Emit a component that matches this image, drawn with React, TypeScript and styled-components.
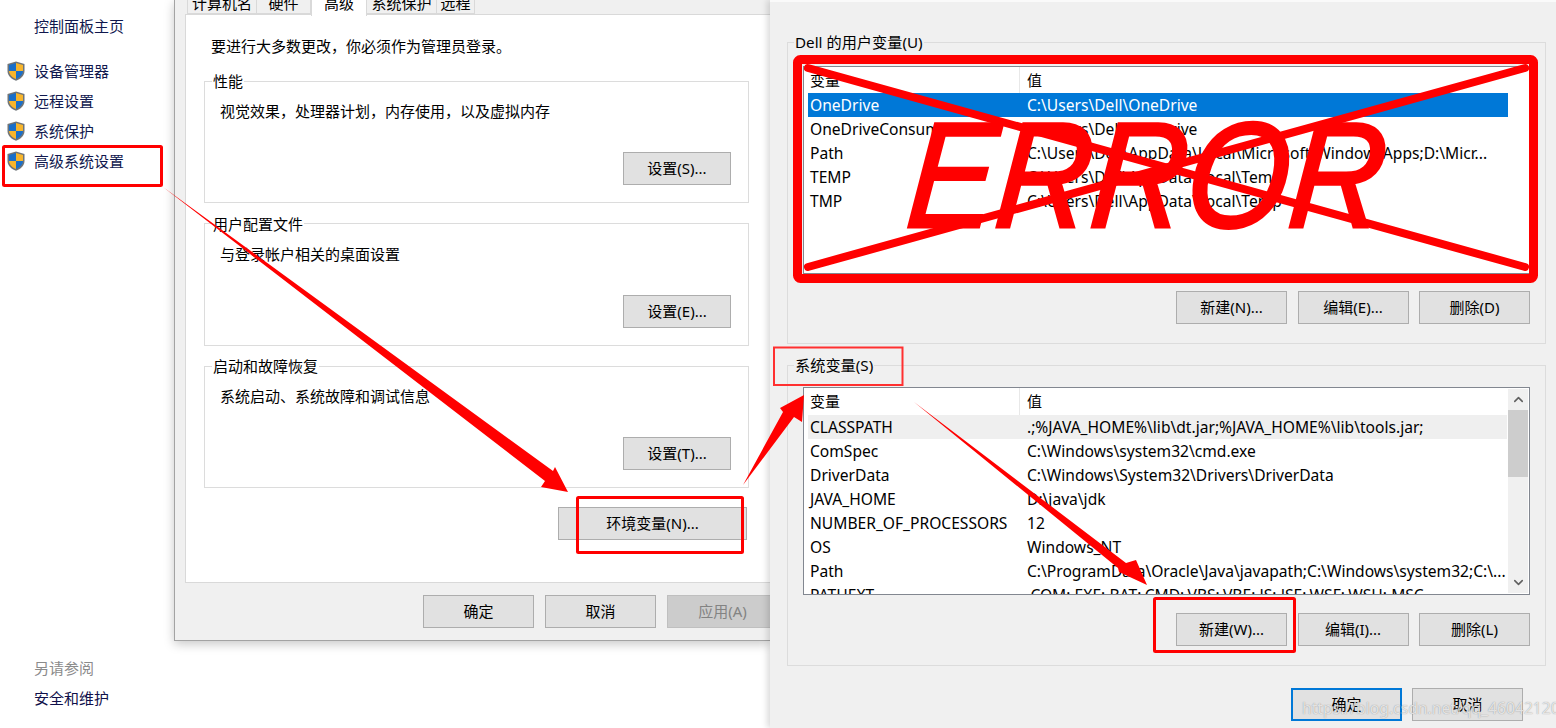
import React from "react";
import styled, { createGlobalStyle } from "styled-components";
import { ChevronUp, ChevronDown } from "lucide-react";

const Global = createGlobalStyle`
  html, body { margin: 0; padding: 0; background: #fff; }
  * { box-sizing: border-box; }
  body { font-family: "Noto Sans", "Noto Sans CJK SC", sans-serif; font-size: 15px; color: #000; }
`;

const Page = styled.div`
  position: relative;
  display: flex;
  width: 1556px;
  height: 728px;
  overflow: hidden;
  background: #fff;
`;

/* Sidebar */
const Sidebar = styled.aside`
  width: 174px;
  flex: none;
  display: flex;
  flex-direction: column;
  padding: 11px 0 15px;
  font-size: 15px;
  line-height: 30px;
  color: #10184e;
`;
const HomeLink = styled.div`
  padding-left: 34px;
  margin-bottom: 15px;
`;
const NavItem = styled.div`
  display: flex;
  align-items: center;
  gap: 9px;
  padding-left: 7px;
  height: 30px;
`;
const SeeAlso = styled.div`
  margin-top: auto;
  padding-left: 34px;
  color: #8b8b8b;
`;
const SeeLink = styled.div`
  padding-left: 34px;
  color: #10104a;
`;

/* System properties dialog */
const Dialog = styled.section`
  width: 596px;
  height: 641px;
  flex: none;
  background: #f0f0f0;
  border-left: 1px solid #a3a3a3;
  border-bottom: 1px solid #a3a3a3;
  box-shadow: 0 3px 10px rgba(0, 0, 0, 0.22);
  padding-left: 10px;
  overflow: hidden;
`;
const TabStrip = styled.div`
  display: flex;
  height: 14px;
  padding-left: 2px;
  width: 620px;
  position: relative;
  z-index: 1;
`;
const Tab = styled.div<{ $w: number; $active?: boolean }>`
  width: ${(p) => p.$w}px;
  height: ${(p) => (p.$active ? 26 : 24)}px;
  margin-top: -10px;
  flex: none;
  text-align: center;
  line-height: 24px;
  font-size: 15px;
  background: ${(p) => (p.$active ? "#fff" : "#f0f0f0")};
  border: 1px solid #d9d9d9;
  border-bottom: ${(p) => (p.$active ? "0" : "1px solid #d9d9d9")};
  border-left-width: ${(p) => (p.$active ? "1px" : "0")};
  &:first-child { border-left-width: 1px; }
`;
const TabPanel = styled.div`
  width: 620px;
  height: 569px;
  background: #fff;
  border: 1px solid #d9d9d9;
  padding: 18px 0 0 18px;
`;
const Intro = styled.div`
  padding-left: 7px;
  line-height: 26px;
  height: 38px;
`;
const Groups = styled.div`
  width: 545px;
  display: flex;
  flex-direction: column;
  gap: 10.5px;
`;
const PropGroup = styled.fieldset`
  margin: 0;
  height: 132px;
  padding: 10px 17px 0 15px;
  border: 1px solid #dcdcdc;
  min-width: 0;
`;
const PropLegend = styled.legend`
  margin-left: -8px;
  padding: 0 1px;
  line-height: 20px;
`;
const PropText = styled.div`
  line-height: 20px;
`;
const GroupFoot = styled.div`
  margin-top: 31px;
  display: flex;
  justify-content: flex-end;
`;
const Btn = styled.div<{ $w?: number; $disabled?: boolean; $primary?: boolean }>`
  width: ${(p) => p.$w ?? 111}px;
  height: 33px;
  flex: none;
  display: flex;
  align-items: center;
  justify-content: center;
  padding-bottom: 2px;
  font-size: 15px;
  background: ${(p) => (p.$disabled ? "#cccccc" : "#e1e1e1")};
  color: ${(p) => (p.$disabled ? "#838383" : "#000")};
  border: ${(p) => (p.$primary ? "2px solid #0078d7" : `1px solid ${p.$disabled ? "#bfbfbf" : "#adadad"}`)};
`;
const EnvRow = styled.div`
  width: 543px;
  display: flex;
  justify-content: flex-end;
  margin-top: 19px;
`;
const DialogFoot = styled.div`
  display: flex;
  gap: 11px;
  padding: 12px 0 0 238px;
  width: 640px;
`;

/* Environment variables dialog */
const EnvPanel = styled.section`
  position: relative;
  z-index: 2;
  flex: none;
  width: 786px;
  height: 728px;
  background: #f0f0f0;
  border-top: 2px solid #fafafa;
  box-shadow: -3px 0 6px rgba(0, 0, 0, 0.14);
  padding: 30px 10px 0 17px;
  display: flex;
  flex-direction: column;
`;
const VarGroup = styled.fieldset<{ $h: number; $top: number }>`
  margin: 0 0 11px;
  height: ${(p) => p.$h}px;
  flex: none;
  min-width: 0;
  padding: ${(p) => p.$top}px 15px 0 15px;
  border: 1px solid #dcdcdc;
`;
const VarLegend = styled.legend`
  margin-left: -9px;
  padding: 0 1px;
  line-height: 20px;
  font-size: 15.2px;
`;
const ListFrame = styled.div<{ $h: number }>`
  display: flex;
  height: ${(p) => p.$h}px;
  background: #fff;
  border: 1px solid #828790;
  overflow: hidden;
`;
const ListBody = styled.div<{ $reserve?: number }>`
  flex: 1;
  min-width: 0;
  padding-left: 4px;
  padding-right: ${(p) => p.$reserve ?? 1}px;
`;
const HeadRow = styled.div<{ $h: number }>`
  display: grid;
  grid-template-columns: 212px 1fr;
  height: ${(p) => p.$h}px;
  line-height: 26px;
  font-size: 15px;
  & > span { padding-left: 2px; border-right: 1px solid #e8e8e8; }
  & > span + span { padding-left: 7px; border-right: 0; }
`;
const VarRow = styled.div<{ $state?: "selected" | "soft" }>`
  display: grid;
  grid-template-columns: 212px 1fr;
  height: 24px;
  line-height: 24px;
  font-size: 15.6px;
  white-space: nowrap;
  background: ${(p) => (p.$state === "selected" ? "#0078d7" : p.$state === "soft" ? "#efefef" : "transparent")};
  color: ${(p) => (p.$state === "selected" ? "#fff" : "#000")};
  & > span:first-child { padding-left: 2px; overflow: hidden; }
  & > span + span { padding-left: 7px; }
`;
const ScrollTrack = styled.div`
  width: 20px;
  flex: none;
  margin: 1px 1px 1px 0;
  background: #f0f0f0;
  display: flex;
  flex-direction: column;
  align-items: center;
  color: #606060;
`;
const ScrollCap = styled.div`
  height: 21px;
  display: flex;
  align-items: center;
  justify-content: center;
`;
const ScrollThumb = styled.div`
  width: 100%;
  height: 67px;
  background: #cdcdcd;
`;
const ScrollGap = styled.div`
  flex: 1;
`;
const ButtonRow = styled.div<{ $top: number }>`
  display: flex;
  justify-content: flex-end;
  gap: 10.5px;
  margin-top: ${(p) => p.$top}px;
`;
const EnvFoot = styled.div`
  display: flex;
  justify-content: flex-end;
  gap: 10px;
  padding: 11px 23px 0 0;
`;

/* Annotations drawn over the screenshot */
const Annotation = styled.svg`
  position: absolute;
  left: 0;
  top: 0;
  z-index: 3;
  pointer-events: none;
`;
const ErrorStamp = styled.div`
  position: absolute;
  z-index: 4;
  left: 904px;
  top: 84px;
  font-family: "Liberation Sans", sans-serif;
  font-style: italic;
  font-size: 150px;
  line-height: 182px;
  color: #ff0000;
  -webkit-text-stroke: 3px #ff0000;
  transform: skewX(-5deg) scaleX(0.88);
  transform-origin: left 150px;
  white-space: nowrap;
`;
const Watermark = styled.div`
  position: absolute;
  z-index: 4;
  left: 1302px;
  top: 697px;
  font-size: 15.7px;
  line-height: 22px;
  color: rgba(255, 255, 255, 0.75);
  text-shadow: 0 0 1px rgba(90, 90, 90, 0.7);
  white-space: nowrap;
`;

const Shield = () => (
  <svg width="18" height="20" viewBox="0 0 18 20">
    <path d="M9 .5 17.5 3v7c0 4.8-4 8-8.500 9.700C4.500 18 .5 14.800 .5 10V3Z" fill="#6f7478" />
    <path d="M9 2 2 4v6h7Z" fill="#1a6fc9" />
    <path d="M9 2l7 2v6H9Z" fill="#f7b52c" />
    <path d="M2 10h7v8c-3.600-1.400-6.600-4-7-8Z" fill="#f7b52c" />
    <path d="M16 10H9v8c3.600-1.400 6.600-4 7-8Z" fill="#1a6fc9" />
  </svg>
);

const userRows = [
  ["OneDrive", "C:\\Users\\Dell\\OneDrive"],
  ["OneDriveConsumer", "C:\\Users\\Dell\\OneDrive"],
  ["Path", "C:\\Users\\Dell\\AppData\\Local\\Microsoft\\WindowsApps;D:\\Micr..."],
  ["TEMP", "C:\\Users\\Dell\\AppData\\Local\\Temp"],
  ["TMP", "C:\\Users\\Dell\\AppData\\Local\\Temp"],
];
const systemRows = [
  ["CLASSPATH", ".;%JAVA_HOME%\\lib\\dt.jar;%JAVA_HOME%\\lib\\tools.jar;"],
  ["ComSpec", "C:\\Windows\\system32\\cmd.exe"],
  ["DriverData", "C:\\Windows\\System32\\Drivers\\DriverData"],
  ["JAVA_HOME", "D:\\java\\jdk"],
  ["NUMBER_OF_PROCESSORS", "12"],
  ["OS", "Windows_NT"],
  ["Path", "C:\\ProgramData\\Oracle\\Java\\javapath;C:\\Windows\\system32;C:\\..."],
  ["PATHEXT", ".COM;.EXE;.BAT;.CMD;.VBS;.VBE;.JS;.JSE;.WSF;.WSH;.MSC"],
];

export default function App() {
  return (
    <Page>
      <Global />
      <Sidebar>
        <HomeLink>控制面板主页</HomeLink>
        {["设备管理器", "远程设置", "系统保护", "高级系统设置"].map((t) => (
          <NavItem key={t}>
            <Shield />
            {t}
          </NavItem>
        ))}
        <SeeAlso>另请参阅</SeeAlso>
        <SeeLink>安全和维护</SeeLink>
      </Sidebar>

      <Dialog>
        <TabStrip>
          <Tab $w={70}>计算机名</Tab>
          <Tab $w={54}>硬件</Tab>
          <Tab $w={56} $active>高级</Tab>
          <Tab $w={70}>系统保护</Tab>
          <Tab $w={38}>远程</Tab>
        </TabStrip>
        <TabPanel>
          <Intro>要进行大多数更改，你必须作为管理员登录。</Intro>
          <Groups>
            <PropGroup>
              <PropLegend>性能</PropLegend>
              <PropText>视觉效果，处理器计划，内存使用，以及虚拟内存</PropText>
              <GroupFoot><Btn $w={108}>设置(S)...</Btn></GroupFoot>
            </PropGroup>
            <PropGroup>
              <PropLegend>用户配置文件</PropLegend>
              <PropText>与登录帐户相关的桌面设置</PropText>
              <GroupFoot><Btn $w={108}>设置(E)...</Btn></GroupFoot>
            </PropGroup>
            <PropGroup>
              <PropLegend>启动和故障恢复</PropLegend>
              <PropText>系统启动、系统故障和调试信息</PropText>
              <GroupFoot><Btn $w={108}>设置(T)...</Btn></GroupFoot>
            </PropGroup>
          </Groups>
          <EnvRow><Btn $w={189}>环境变量(N)...</Btn></EnvRow>
        </TabPanel>
        <DialogFoot>
          <Btn>确定</Btn>
          <Btn>取消</Btn>
          <Btn $disabled>应用(A)</Btn>
        </DialogFoot>
      </Dialog>

      <EnvPanel>
        <VarGroup $h={312} $top={14}>
          <VarLegend>Dell 的用户变量(U)</VarLegend>
          <ListFrame $h={208}>
            <ListBody $reserve={21}>
              <HeadRow $h={26}><span>变量</span><span>值</span></HeadRow>
              {userRows.map(([k, v], i) => (
                <VarRow key={k} $state={i === 0 ? "selected" : undefined}>
                  <span>{k}</span><span>{v}</span>
                </VarRow>
              ))}
            </ListBody>
          </ListFrame>
          <ButtonRow $top={17}>
            <Btn>新建(N)...</Btn>
            <Btn>编辑(E)...</Btn>
            <Btn>删除(D)</Btn>
          </ButtonRow>
        </VarGroup>
        <VarGroup $h={311} $top={12}>
          <VarLegend>系统变量(S)</VarLegend>
          <ListFrame $h={208}>
            <ListBody>
              <HeadRow $h={27}><span>变量</span><span>值</span></HeadRow>
              {systemRows.map(([k, v], i) => (
                <VarRow key={k} $state={i === 0 ? "soft" : undefined}>
                  <span>{k}</span><span>{v}</span>
                </VarRow>
              ))}
            </ListBody>
            <ScrollTrack>
              <ScrollCap><ChevronUp size={15} strokeWidth={2.5} /></ScrollCap>
              <ScrollThumb />
              <ScrollGap />
              <ScrollCap><ChevronDown size={15} strokeWidth={2.5} /></ScrollCap>
            </ScrollTrack>
          </ListFrame>
          <ButtonRow $top={18}>
            <Btn>新建(W)...</Btn>
            <Btn>编辑(I)...</Btn>
            <Btn>删除(L)</Btn>
          </ButtonRow>
        </VarGroup>
        <EnvFoot>
          <Btn $primary>确定</Btn>
          <Btn>取消</Btn>
        </EnvFoot>
      </EnvPanel>

      <Annotation width="1556" height="728" viewBox="0 0 1556 728">
        <g fill="none" stroke="#ff0000">
          <rect x="3.500" y="146.500" width="158" height="39" strokeWidth="3" rx="1" />
          <rect x="577.500" y="497.500" width="165" height="55" strokeWidth="3" rx="1" />
          <rect x="1154.500" y="598.500" width="140" height="53" strokeWidth="3" rx="1" />
          <rect x="774" y="347.500" width="128.500" height="37.500" strokeWidth="2" stroke="#ff3030" />
          <rect x="797.500" y="59.500" width="736" height="219" strokeWidth="9" rx="3" />
        </g>
        <g stroke="#ff0000" strokeWidth="8" strokeLinecap="round">
          <line x1="808" y1="68" x2="1525" y2="267" />
          <line x1="1525" y1="68" x2="808" y2="267" />
        </g>
        <g fill="#ff0000">
          <polygon points="163,187 553,471 555,467 568,492 541,487 545,481" />
          <polygon points="743,485 783,412 780,408 804,395 802,422 794,417" />
          <polygon points="914,402 1126,563 1136,560 1147,585 1119,572 1118,568" />
        </g>
      </Annotation>
      <ErrorStamp>ERROR</ErrorStamp>
      <Watermark>https://blog.csdn.net/qq_46042120</Watermark>
    </Page>
  );
}
